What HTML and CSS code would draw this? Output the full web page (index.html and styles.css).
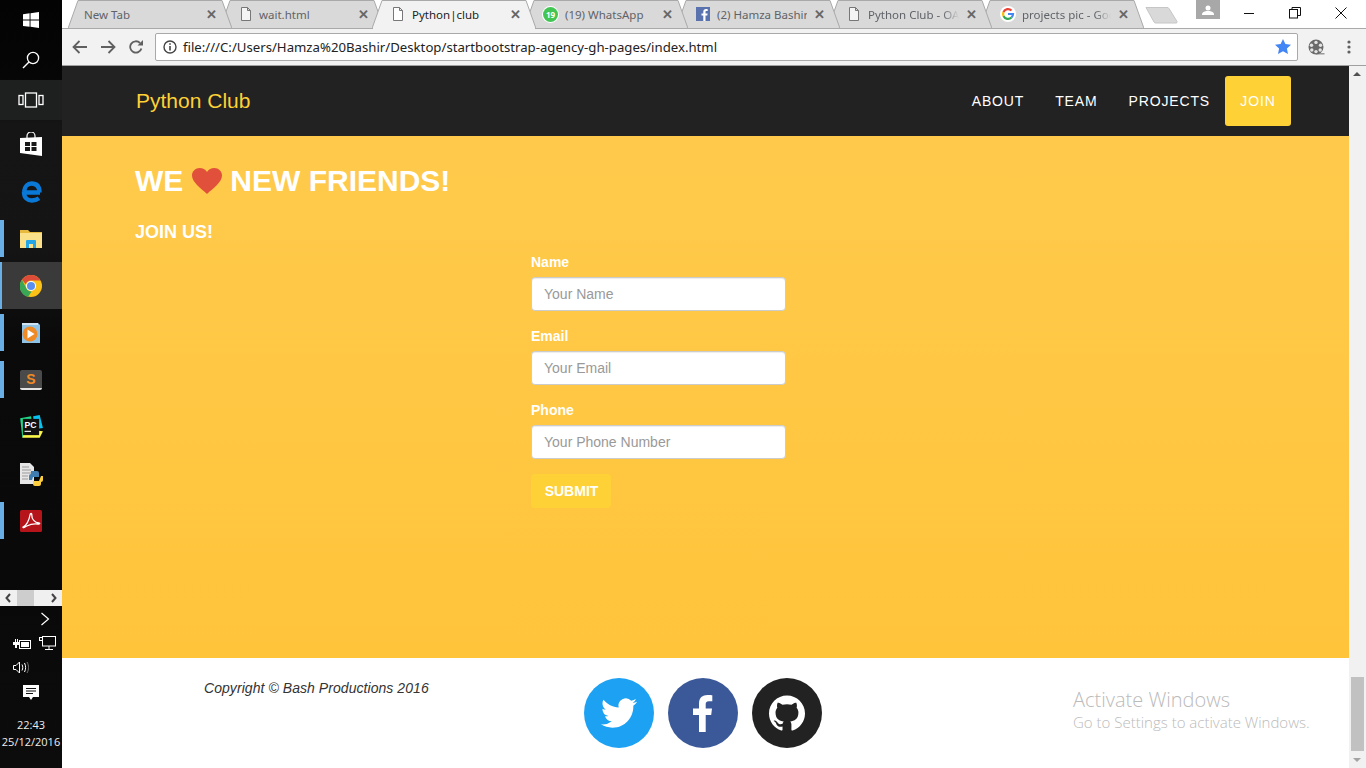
FILE: index.html
```html
<!DOCTYPE html>
<html lang="en">
  <head>
    <meta charset="utf-8">
    <title>Python|club</title>
    <link rel="stylesheet" href="styles.css">
  </head>
  <body>
    <!-- windows taskbar, docked left -->
    <aside class="taskbar">
      <div class="tb-start">
        <svg width="18" height="18" viewBox="0 0 18 18"><path fill="#fff" d="M1 3.2l6.6-.9v6.3H1zM8.500 2.200L17 1v7.600H8.500zM1 9.500h6.600v6.300L1 14.900zM8.500 9.500H17V17l-8.500-1.200z"/></svg>
      </div>
      <div class="tb-search">
        <svg width="20" height="20" viewBox="0 0 20 20"><circle cx="12" cy="8" r="5.600" fill="none" stroke="#fff" stroke-width="1.300"/><path d="M8 12l-6 6" stroke="#fff" stroke-width="1.500"/></svg>
      </div>
      <div class="tb-view">
        <svg width="26" height="16" viewBox="0 0 26 16" fill="none" stroke="#fff" stroke-width="1.300"><rect x="1" y="3.500" width="4" height="9"/><rect x="7.500" y="1" width="11" height="14"/><rect x="21" y="3.500" width="4" height="9"/></svg>
      </div>
      <div class="dock">
        <div class="dock-item">
          <svg width="24" height="26" viewBox="0 0 24 26"><path d="M8 6V4a4 4 0 0 1 8 0v2" fill="none" stroke="#fff" stroke-width="1.200"/><path fill="#fff" d="M1 6l22-1v19L1 21z"/><path fill="#1a1a1a" d="M6 10h5v4H6zM12.500 10h5v4h-5zM6 15h5v4H6zM12.500 15h5v4h-5z"/></svg>
        </div>
        <div class="dock-item">
          <svg width="22" height="22" viewBox="0 0 22 22"><path fill="none" stroke="#0a78d7" stroke-width="4.400" d="M20 11.500H4.500M4 11C4.500 5 8 2.500 11.500 2.500c5 0 8 3 8 9M4 11c0 6 3.500 8.500 8 8.500 3 0 5-.8 7-2.200"/></svg>
        </div>
        <div class="dock-item is-open">
          <svg width="22" height="20" viewBox="0 0 22 20"><path fill="#e8b93f" d="M0 1h8l2 2h12v3H0z"/><path fill="#fbe08a" d="M0 4h22v15H0z"/><path fill="#24a5e8" d="M6 19v-7a1 1 0 0 1 1-1h8a1 1 0 0 1 1 1v7h-3v-4H9v4z"/></svg>
        </div>
        <div class="dock-item is-open is-active">
          <svg width="22" height="22" viewBox="0 0 22 22"><circle cx="11" cy="11" r="11" fill="#fbc116"/><path fill="#dd4b39" d="M11 0a11 11 0 0 1 9.500 5.500H11a5.500 5.500 0 0 0-5.200 3.700L1.900 4.700A11 11 0 0 1 11 0z"/><path fill="#3aa757" d="M1.900 4.700l4.600 8.900a5.500 5.500 0 0 0 5.100 2.900L8 22A11 11 0 0 1 1.900 4.700z"/><circle cx="11" cy="11" r="5" fill="#fff"/><circle cx="11" cy="11" r="4" fill="#5a8ff0"/></svg>
        </div>
        <div class="dock-item is-open">
          <svg width="20" height="22" viewBox="0 0 20 22"><path fill="#8fc3e6" d="M1 1h16l2 2v18H1z"/><path fill="#cfe3f2" d="M1 1h16v2H1z"/><circle cx="9" cy="12" r="7.500" fill="#f08a24"/><path fill="#fff" d="M6.500 7.500l7 4.500-7 4.500z"/></svg>
        </div>
        <div class="dock-item is-open">
          <div class="sublime">S</div>
        </div>
        <div class="dock-item">
          <svg width="26" height="26" viewBox="0 0 24 24"><path fill="#21d789" d="M2 4l10-2 2 12-10 8z"/><path fill="#fcf84a" d="M4 22l3-8 16 2-3 6z"/><path fill="#07c3f2" d="M14 2l6-1 3 12-8 1z"/><rect x="4.500" y="4.500" width="15" height="15" fill="#111"/><path fill="#fff" d="M6 15.500h6v1H6z"/><text class="pc-text" x="6" y="12.500">PC</text></svg>
        </div>
        <div class="dock-item">
          <svg width="24" height="24" viewBox="0 0 24 24"><path fill="#e6e6e6" d="M1 1h10l4 4v17H1z"/><path stroke="#999" stroke-width="1" d="M3 5h7M3 8h9M3 11h9M3 14h6M3 17h6"/><path fill="#3f7cb0" d="M12 9h6a2 2 0 0 1 2 2v4h-6l-1 3h-3v-4a2 2 0 0 1 2-2z"/><path fill="#fdcf3e" d="M22 14h2v4a2 2 0 0 1-2 2v2a2 2 0 0 1-2 2h-4a2 2 0 0 1-2-2v-3h6z"/></svg>
        </div>
        <div class="dock-item is-open">
          <svg width="22" height="22" viewBox="0 0 22 22"><rect width="22" height="22" rx="1.500" fill="#b5141a"/><path fill="none" stroke="#fff" stroke-width="1.300" d="M3 17c3-1 6-6 7-12 .3-2 2-2 1.800 0-.3 4 3 7.500 7 8 1.500.2 1 1.500-1 1-4-.5-8 .5-11 2-2 1-4 2.500-3.800 1z"/></svg>
        </div>
      </div>
      <div class="tb-scroll">
        <svg class="tb-arrow" width="6" height="10" viewBox="0 0 6 10"><path d="M5 1L1.500 5 5 9" fill="none" stroke="#444" stroke-width="2"/></svg>
        <span class="tb-thumb"></span>
        <svg class="tb-arrow-right" width="6" height="10" viewBox="0 0 6 10"><path d="M1 1l3.500 4L1 9" fill="none" stroke="#444" stroke-width="2"/></svg>
      </div>
      <div class="tray">
        <svg class="tray-more" width="10" height="14" viewBox="0 0 10 14"><path d="M1.500 1l7 6-7 6" fill="none" stroke="#fff" stroke-width="1.200"/></svg>
        <div class="tray-row">
          <svg width="18" height="12" viewBox="0 0 18 12"><path fill="#fff" d="M0 4h2V1h1v3h1V1h1v3h1v3H4v3H2V7H0z"/><rect x="6.500" y="2.500" width="11" height="8" fill="none" stroke="#fff"/><rect x="8" y="4" width="8" height="5" fill="#fff"/></svg>
          <svg width="17" height="15" viewBox="0 0 17 15" fill="none" stroke="#fff"><rect x="3.500" y=".5" width="13" height="9.500"/><path d="M10 10v3M6 13.500h8"/><rect x=".5" y="1.500" width="3" height="3" fill="#111"/></svg>
        </div>
        <div class="tray-row tray-sound">
          <svg width="16" height="13" viewBox="0 0 16 13" fill="none" stroke="#fff"><path d="M.5 4.500h2.500L6.500 1v11L3 8.500H.5z"/><path d="M9 3.500c1 2 1 4 0 6M11.500 2c1.500 3 1.500 6 0 9"/><path stroke="#777" d="M14 1c2 3.500 2 7.500 0 11"/></svg>
        </div>
        <div class="tray-note">
          <svg width="16" height="16" viewBox="0 0 16 16"><path fill="#fff" d="M0 0h16v12H10l-2 3-2-3H0z"/><path stroke="#111" d="M3 3.500h10M3 6h10M3 8.500h7"/></svg>
        </div>
        <div class="clock">22:43<br>25/12/2016</div>
      </div>
    </aside>

    <div class="window">
      <header class="chrome">
        <div class="tabstrip">
          <div class="tabs">
            <div class="tab no-icon">
              <svg class="tab-shape" width="164" height="29" viewBox="0 0 164 29"><path d="M0 28.500L10 .5h144l10 28z"/></svg>
              <span class="tab-title">New Tab</span><span class="tab-close">&#10005;</span>
            </div>
            <div class="tab">
              <svg class="tab-shape" width="164" height="29" viewBox="0 0 164 29"><path d="M0 28.500L10 .5h144l10 28z"/></svg>
              <svg class="fav fav-tight" width="12" height="16" viewBox="0 0 12 16"><path d="M1.500 1.500h6l3 3v10h-9zM7.500 1.500v3h3" fill="#f4f4f4" stroke="#777"/></svg>
              <span class="tab-title">wait.html</span><span class="tab-close">&#10005;</span>
            </div>
            <div class="tab active">
              <svg class="tab-shape" width="164" height="29" viewBox="0 0 164 29"><path d="M0 28.500L10 .5h144l10 28z"/></svg>
              <svg class="fav" width="12" height="16" viewBox="0 0 12 16"><path d="M1.500 1.500h6l3 3v10h-9zM7.500 1.500v3h3" fill="#fff" stroke="#777"/></svg>
              <span class="tab-title">Python|club</span><span class="tab-close">&#10005;</span>
            </div>
            <div class="tab">
              <svg class="tab-shape" width="164" height="29" viewBox="0 0 164 29"><path d="M0 28.500L10 .5h144l10 28z"/></svg>
              <span class="fav wa">19</span>
              <span class="tab-title">(19) WhatsApp</span><span class="tab-close">&#10005;</span>
            </div>
            <div class="tab">
              <svg class="tab-shape" width="164" height="29" viewBox="0 0 164 29"><path d="M0 28.500L10 .5h144l10 28z"/></svg>
              <svg class="fav fav-tight" width="14" height="14" viewBox="0 0 14 14"><rect width="14" height="14" fill="#5a73ae"/><path fill="#fff" d="M9.500 14V8.500h1.800l.3-2.100H9.500V5.100c0-.6.2-1 1-1h1.200V2.200C11.500 2.100 10.800 2 10 2 8.400 2 7.300 3 7.300 4.800v1.600H5.500v2.100h1.800V14z"/></svg>
              <span class="tab-title">(2) Hamza Bashir</span><span class="tab-close">&#10005;</span>
            </div>
            <div class="tab">
              <svg class="tab-shape" width="164" height="29" viewBox="0 0 164 29"><path d="M0 28.500L10 .5h144l10 28z"/></svg>
              <svg class="fav" width="12" height="16" viewBox="0 0 12 16"><path d="M1.500 1.500h6l3 3v10h-9zM7.500 1.500v3h3" fill="#f4f4f4" stroke="#777"/></svg>
              <span class="tab-title fade">Python Club - OA</span><span class="tab-close">&#10005;</span>
            </div>
            <div class="tab">
              <svg class="tab-shape" width="164" height="29" viewBox="0 0 164 29"><path d="M0 28.500L10 .5h144l10 28z"/></svg>
              <svg class="fav fav-g" width="16" height="16" viewBox="0 0 16 16"><circle cx="8" cy="8" r="8" fill="#fff"/><path fill="none" stroke="#4285f4" stroke-width="2.200" d="M8 8h5a5 5 0 0 1-1.500 3.500"/><path fill="none" stroke="#34a853" stroke-width="2.200" d="M11.500 11.500A5 5 0 0 1 3.500 10"/><path fill="none" stroke="#fbbc05" stroke-width="2.200" d="M3.500 10a5 5 0 0 1 0-4"/><path fill="none" stroke="#ea4335" stroke-width="2.200" d="M3.500 6a5 5 0 0 1 8-1.500"/></svg>
              <span class="tab-title fade">projects pic - Goo</span><span class="tab-close">&#10005;</span>
            </div>
          </div>
          <svg class="newtab" width="34" height="18" viewBox="0 0 34 18"><path d="M1 1.500h21a2 2 0 0 1 2 1l8 13a1 1 0 0 1-1 1.500H11a2 2 0 0 1-2-1z" fill="#d9d9d9" stroke="#c6c6c6"/></svg>
          <div class="profile">
            <svg width="12" height="10" viewBox="0 0 12 10"><circle cx="6" cy="3" r="2.500" fill="#fff"/><path fill="#fff" d="M0 10V8.500C1 6.500 4 6 6 6s5 .5 6 2.500V10z"/></svg>
          </div>
          <div class="winctl">
            <span class="winbtn"><svg width="12" height="12" viewBox="0 0 12 12"><path d="M1 6.500h10" stroke="#111"/></svg></span>
            <span class="winbtn"><svg width="12" height="12" viewBox="0 0 12 12" fill="none" stroke="#111"><rect x=".5" y="2.500" width="8" height="8.500"/><path d="M3 2.500V.5h8.500v8H8.500"/></svg></span>
            <span class="winbtn"><svg width="12" height="12" viewBox="0 0 12 12"><path d="M.5.500l11 11M11.500.500l-11 11" stroke="#111"/></svg></span>
          </div>
        </div>
        <div class="toolbar">
          <svg class="tool" width="16" height="14" viewBox="0 0 16 14" fill="none" stroke="#606060" stroke-width="1.800"><path d="M15 7H2M7.500 1L1.500 7l6 6"/></svg>
          <svg class="tool" width="16" height="14" viewBox="0 0 16 14" fill="none" stroke="#606060" stroke-width="1.800"><path d="M1 7h13M8.500 1l6 6-6 6"/></svg>
          <svg class="tool tool-reload" width="14" height="14" viewBox="0 0 14 14"><path fill="none" stroke="#606060" stroke-width="1.800" d="M12.400 8.500A5.700 5.700 0 1 1 11 3"/><path fill="#606060" d="M8.500 5.500H14V0z"/></svg>
          <div class="omnibox">
            <svg width="14" height="14" viewBox="0 0 14 14"><circle cx="7" cy="7" r="6" fill="none" stroke="#444" stroke-width="1.400"/><path d="M7 6v4.500M7 3.300v1.500" stroke="#444" stroke-width="1.600"/></svg>
            <span class="url">file:///C:/Users/Hamza%20Bashir/Desktop/startbootstrap-agency-gh-pages/index.html</span>
            <svg class="star" width="16" height="15" viewBox="0 0 16 15"><path fill="#4285f4" d="M8 0l2.400 5 5.600.7-4.100 3.800 1.100 5.500L8 12.300 3 15l1.100-5.500L0 5.700 5.600 5z"/></svg>
          </div>
          <svg class="reel" width="17" height="16" viewBox="0 0 17 16"><path d="M8 14h8.500v1.500H8z" fill="#999"/><circle cx="8" cy="8" r="7.500" fill="#6a6a6a"/><g fill="#e4e4e4"><circle cx="8" cy="3.400" r="1.700"/><circle cx="8" cy="12.600" r="1.700"/><circle cx="3.500" cy="6.200" r="1.700"/><circle cx="12.500" cy="6.200" r="1.700"/><circle cx="3.800" cy="11" r="1.700"/><circle cx="12.200" cy="11" r="1.700"/></g></svg>
          <svg class="menu" width="4" height="14" viewBox="0 0 4 14"><g fill="#606060"><circle cx="2" cy="2" r="1.600"/><circle cx="2" cy="7" r="1.600"/><circle cx="2" cy="12" r="1.600"/></g></svg>
        </div>
      </header>

      <div class="viewport">
        <div class="page">
          <nav class="navbar">
            <a class="brand">Python Club</a>
            <ul class="nav-links">
              <li>About</li>
              <li>Team</li>
              <li>Projects</li>
              <li class="nav-join">Join</li>
            </ul>
          </nav>

          <section class="join">
            <h2>WE <svg class="heart" width="30" height="26" viewBox="0 0 30 27" preserveAspectRatio="none"><path fill="#e0503a" d="M15 27C9 21 0 15 0 7.800 0 3.300 3.500 0 7.700 0 10.700 0 13.500 1.500 15 4.200 16.500 1.500 19.300 0 22.300 0 26.500 0 30 3.300 30 7.800 30 15 21 21 15 27z"/></svg> NEW FRIENDS!</h2>
            <h3>JOIN US!</h3>
            <form class="join-form">
              <div class="field">
                <label>Name</label>
                <input type="text" placeholder="Your Name">
              </div>
              <div class="field">
                <label>Email</label>
                <input type="text" placeholder="Your Email">
              </div>
              <div class="field">
                <label>Phone</label>
                <input type="text" placeholder="Your Phone Number">
              </div>
              <button type="button" class="submit">SUBMIT</button>
            </form>
          </section>

          <footer class="footer">
            <p class="copyright">Copyright &copy; Bash Productions 2016</p>
            <div class="socials">
              <span class="social tw"><svg width="36" height="36" viewBox="0 0 24 24"><path fill="#fff" d="M23.953 4.570a10 10 0 01-2.825.775 4.958 4.958 0 002.163-2.723c-.951.555-2.005.959-3.127 1.184a4.920 4.920 0 00-8.384 4.482C7.690 8.095 4.067 6.130 1.640 3.162a4.822 4.822 0 00-.666 2.475c0 1.710.870 3.213 2.188 4.096a4.904 4.904 0 01-2.228-.616v.060a4.923 4.923 0 003.946 4.827 4.996 4.996 0 01-2.212.085 4.936 4.936 0 004.604 3.417 9.867 9.867 0 01-6.102 2.105c-.390 0-.779-.023-1.170-.067a13.995 13.995 0 007.557 2.209c9.053 0 13.998-7.496 13.998-13.985 0-.210 0-.420-.015-.630A9.935 9.935 0 0024 4.590z"/></svg></span>
              <span class="social fb"><svg width="20" height="37" viewBox="0 0 20 37"><path fill="#fff" d="M6 37V20H0v-6.500h6V8.500C6 2.800 9.500 0 14.500 0c2.300 0 4.200.2 4.800.3v6h-3.400c-2.700 0-3.200 1.300-3.200 3.100v4.100h6.300l-.8 6.500h-5.500v17z"/></svg></span>
              <span class="social gh"><svg width="36" height="36" viewBox="0 0 24 24"><path fill="#fff" d="M12 .297c-6.630 0-12 5.373-12 12 0 5.303 3.438 9.800 8.205 11.385.6.113.82-.258.82-.577 0-.285-.01-1.040-.015-2.040-3.338.724-4.042-1.610-4.042-1.610C4.422 18.070 3.633 17.700 3.633 17.700c-1.087-.744.084-.729.084-.729 1.205.084 1.838 1.236 1.838 1.236 1.070 1.835 2.809 1.305 3.495.998.108-.776.417-1.305.76-1.605-2.665-.3-5.466-1.332-5.466-5.930 0-1.310.465-2.380 1.235-3.220-.135-.303-.54-1.523.105-3.176 0 0 1.005-.322 3.300 1.230.96-.267 1.980-.399 3-.405 1.020.006 2.040.138 3 .405 2.280-1.552 3.285-1.230 3.285-1.230.645 1.653.24 2.873.12 3.176.765.84 1.230 1.910 1.230 3.220 0 4.610-2.805 5.625-5.475 5.920.42.36.81 1.096.81 2.220 0 1.606-.015 2.896-.015 3.286 0 .315.21.69.825.57C20.565 22.092 24 17.592 24 12.297c0-6.627-5.373-12-12-12"/></svg></span>
            </div>
          </footer>
        </div>

        <div class="scrollbar">
          <span class="sb-up"></span>
          <span class="sb-thumb"></span>
          <span class="sb-down"></span>
        </div>

        <div class="watermark">
          <div class="wm-title">Activate Windows</div>
          <div class="wm-sub">Go to Settings to activate Windows.</div>
        </div>
      </div>
    </div>
  </body>
</html>
```

FILE: styles.css
```css
* {
  box-sizing: border-box;
}
html, body {
  height: 768px;
  overflow: hidden;
}
body {
  margin: 0;
  display: flex;
  font-family: "Liberation Sans", Arial, sans-serif;
  background-color: #fff;
}

/* taskbar */
.taskbar {
  width: 62px;
  height: 768px;
  flex: none;
  display: flex;
  flex-direction: column;
  background: linear-gradient(#030303 0, #060606 78px, #151515 125px, #141414 250px, #0a0a0a 340px, #090909 590px, #0c0c0c 768px);
  color: #fff;
}
.tb-start {
  height: 40px;
  display: flex;
  align-items: center;
  justify-content: center;
}
.tb-search {
  height: 40px;
  display: flex;
  align-items: center;
  justify-content: center;
}
.tb-view {
  height: 40px;
  display: flex;
  align-items: center;
  justify-content: center;
  background-color: #1e1f1f;
}
.dock {
  height: 470px;
  padding-top: 1px;
  display: flex;
  flex-direction: column;
}
.dock-item {
  height: 47px;
  flex: none;
  position: relative;
  display: flex;
  align-items: center;
  justify-content: center;
}
.dock-item.is-open::before {
  content: "";
  position: absolute;
  left: 0;
  top: 5px;
  bottom: 5px;
  width: 4px;
  background-color: #6aaee6;
}
.dock-item.is-active {
  background-color: #3a3a3a;
}
.dock-item.is-active::before {
  top: 0;
  bottom: 0;
  width: 2px;
}
.sublime {
  width: 22px;
  height: 20px;
  border-radius: 2px;
  background-color: #4a4a4a;
  border-bottom: 2px solid #e4e4e4;
  color: #f08a24;
  font-size: 14px;
  font-weight: bold;
  line-height: 18px;
  text-align: center;
}
.pc-text {
  font-family: "Liberation Sans", Arial, sans-serif;
  font-size: 8px;
  font-weight: bold;
  fill: #fff;
}
.tb-scroll {
  height: 16px;
  display: flex;
  align-items: center;
  background-color: #f0f0f0;
  padding: 0 5px;
}
.tb-thumb {
  width: 17px;
  height: 16px;
  margin-left: 6px;
  background-color: #cdcdcd;
}
.tb-arrow {
  flex: none;
}
.tb-arrow-right {
  flex: none;
  margin-left: auto;
}
.tray {
  flex: 1;
  display: flex;
  flex-direction: column;
  align-items: center;
}
.tray-more {
  margin: 6px 0 0 28px;
}
.tray-row {
  margin-top: 10px;
  width: 100%;
  padding-left: 13px;
  display: flex;
  gap: 8px;
  align-items: center;
}
.tray-sound {
  margin-top: 10px;
}
.tray-note {
  margin-top: 11px;
  height: 16px;
}
.clock {
  margin-top: 15px;
  font-family: "Open Sans", sans-serif;
  font-size: 11px;
  line-height: 17px;
  text-align: center;
  white-space: nowrap;
  color: #eee;
}

/* browser */
.window {
  flex: 1;
  display: flex;
  flex-direction: column;
  min-width: 0;
}
.chrome {
  height: 66px;
  flex: none;
  font-family: "Noto Sans", sans-serif;
}
.tabstrip {
  height: 29px;
  display: flex;
  align-items: flex-start;
  padding-left: 6px;
  background-color: #fff;
  position: relative;
}
.tabstrip::after {
  content: "";
  position: absolute;
  left: 0;
  right: 0;
  bottom: 0;
  height: 1px;
  background-color: #a9a9a9;
}
.tabs {
  display: flex;
}
.tab {
  position: relative;
  width: 164px;
  height: 29px;
  margin-right: -12px;
  padding: 0 15px 1px 20px;
  display: flex;
  align-items: center;
  flex: none;
  font-size: 11.5px;
  color: #5f6368;
}
.tab:nth-child(1) { z-index: 7; }
.tab:nth-child(2) { z-index: 6; }
.tab:nth-child(3) { z-index: 8; }
.tab:nth-child(4) { z-index: 5; }
.tab:nth-child(5) { z-index: 4; }
.tab:nth-child(6) { z-index: 3; }
.tab:nth-child(7) { z-index: 2; }
.tab.no-icon {
  padding-left: 16px;
}
.tab-shape {
  position: absolute;
  left: 0;
  top: 0;
  z-index: -1;
}
.tab-shape path {
  fill: #d9d9d9;
  stroke: #a9a9a9;
}
.tab.active {
  color: #222;
}
.tab.active .tab-shape path {
  fill: #f2f2f2;
}
.tab.active::after {
  content: "";
  position: absolute;
  left: 1px;
  right: 1px;
  bottom: 0;
  height: 1px;
  background-color: #f2f2f2;
}
.fav {
  flex: none;
  margin-right: 8px;
}
.fav-tight {
  margin-right: 7px;
}
.fav-g {
  margin-right: 6px;
}
.wa {
  width: 15px;
  height: 15px;
  margin-right: 7px;
  margin-left: -1px;
  border-radius: 50%;
  background-color: #43c554;
  color: #fff;
  font-size: 8px;
  font-weight: bold;
  line-height: 15px;
  text-align: center;
  box-shadow: 0 0 0 1px #fff;
}
.tab-title {
  flex: 1;
  white-space: nowrap;
  overflow: hidden;
  min-width: 0;
}
.tab-title.fade {
  -webkit-mask-image: linear-gradient(to right, #000 82%, transparent);
  mask-image: linear-gradient(to right, #000 82%, transparent);
}
.tab-close {
  flex: none;
  width: 11px;
  margin-left: 7px;
  font-size: 13px;
  font-weight: bold;
  line-height: 12px;
  color: #666;
}
.newtab {
  margin: 6px 0 0 13px;
  flex: none;
}
.profile {
  width: 24px;
  height: 19px;
  margin-left: 17px;
  display: flex;
  align-items: center;
  justify-content: center;
  background-color: #a8a8a8;
  flex: none;
}
.winctl {
  display: flex;
  margin-left: auto;
  padding-right: 2px;
}
.winbtn {
  width: 46px;
  height: 26px;
  display: flex;
  align-items: center;
  justify-content: center;
}
.toolbar {
  height: 37px;
  padding: 0 0 1px 10px;
  display: flex;
  align-items: center;
  background-color: #f2f2f2;
  border-bottom: 1px solid #a0a0a0;
}
.tool {
  margin-right: 12px;
  flex: none;
}
.tool-reload {
  margin-left: 1px;
  margin-right: 11px;
}
.omnibox {
  width: 1143px;
  height: 28px;
  margin-left: 1px;
  padding: 0 6px 0 7px;
  display: flex;
  align-items: center;
  gap: 6px;
  background-color: #fff;
  border: 1px solid #a9a9a9;
  border-radius: 2px;
  flex: none;
}
.url {
  font-size: 13.2px;
  color: #222;
  white-space: nowrap;
}
.star {
  margin-left: auto;
}
.reel {
  margin-left: 10px;
  flex: none;
}
.menu {
  margin-left: 22px;
  flex: none;
}

/* page */
.viewport {
  flex: 1;
  display: flex;
  position: relative;
  min-height: 0;
}
.page {
  flex: 1;
  display: flex;
  flex-direction: column;
  min-width: 0;
}
.navbar {
  height: 70px;
  flex: none;
  padding: 0 58px 0 74px;
  display: flex;
  align-items: center;
  justify-content: space-between;
  background-color: #222;
}
.brand {
  font-size: 21px;
  color: #fed136;
}
.nav-links {
  list-style: none;
  margin: 0;
  padding: 0;
  display: flex;
  align-items: center;
  gap: 31px;
  font-size: 14px;
  letter-spacing: .85px;
  text-transform: uppercase;
  color: #fff;
}
.nav-join {
  width: 66px;
  height: 50px;
  margin-left: -16px;
  line-height: 50px;
  text-align: center;
  background-color: #fed136;
  border-radius: 3px;
}
.join {
  height: 522px;
  flex: none;
  padding: 24px 0 0 73px;
  background: linear-gradient(#ffca4c, #ffc43a);
  color: #fff;
}
.join h2 {
  margin: 0;
  height: 42px;
  display: flex;
  align-items: center;
  gap: 8.5px;
  font-size: 30px;
  font-weight: bold;
}
.heart {
  flex: none;
}
.join h3 {
  margin: 20px 0 0;
  font-size: 18px;
  line-height: 20px;
  font-weight: bold;
}
.join-form {
  width: 255px;
  margin: 10px 0 0 396px;
}
.field {
  height: 74px;
}
.field label {
  display: block;
  height: 20px;
  margin-bottom: 5px;
  font-size: 14px;
  font-weight: bold;
  line-height: 20px;
}
.field input {
  display: block;
  width: 100%;
  height: 34px;
  padding: 6px 12px;
  font-family: "Liberation Sans", Arial, sans-serif;
  font-size: 14px;
  color: #555;
  background-color: #fff;
  border: 1px solid #ccc;
  border-radius: 4px;
  box-shadow: inset 0 1px 1px rgba(0, 0, 0, .075);
}
.field input::placeholder {
  color: #999;
  opacity: 1;
}
.submit {
  display: block;
  width: 80px;
  height: 34px;
  margin-top: 0;
  padding: 0 0 0 1px;
  font-family: "Liberation Sans", Arial, sans-serif;
  font-size: 14px;
  font-weight: bold;
  color: #fff;
  background-color: #fed136;
  border: 1px solid #fed136;
  border-radius: 3px;
}
.footer {
  flex: 1;
  position: relative;
  display: flex;
  justify-content: center;
  padding-top: 20px;
  background-color: #fff;
}
.copyright {
  position: absolute;
  left: 142px;
  top: 21px;
  margin: 0;
  font-size: 14px;
  line-height: 18px;
  font-style: italic;
  letter-spacing: .06px;
  color: #333;
}
.socials {
  display: flex;
  gap: 14px;
  margin-left: -6px;
}
.social {
  width: 70px;
  height: 70px;
  border-radius: 50%;
  display: flex;
  align-items: center;
  justify-content: center;
}
.tw { background-color: #1da1f2; }
.fb { background-color: #3b5998; }
.gh { background-color: #222; }

.scrollbar {
  width: 17px;
  flex: none;
  position: relative;
  background-color: #f1f1f1;
}
.sb-up, .sb-down {
  position: absolute;
  left: 4px;
  width: 0;
  height: 0;
  border-left: 4px solid transparent;
  border-right: 4px solid transparent;
}
.sb-up {
  top: 6px;
  border-bottom: 4px solid #505050;
}
.sb-down {
  bottom: 6px;
  border-top: 4px solid #a3a3a3;
}
.sb-thumb {
  position: absolute;
  left: 2px;
  right: 2px;
  bottom: 17px;
  height: 74px;
  background-color: #c1c1c1;
}
.watermark {
  position: absolute;
  left: 1011px;
  top: 621px;
  font-family: "Open Sans", sans-serif;
  font-weight: 300;
  color: #bbb;
  white-space: nowrap;
}
.wm-title {
  font-size: 20px;
  line-height: 26px;
}
.wm-sub {
  font-size: 15px;
  line-height: 18px;
}
```
